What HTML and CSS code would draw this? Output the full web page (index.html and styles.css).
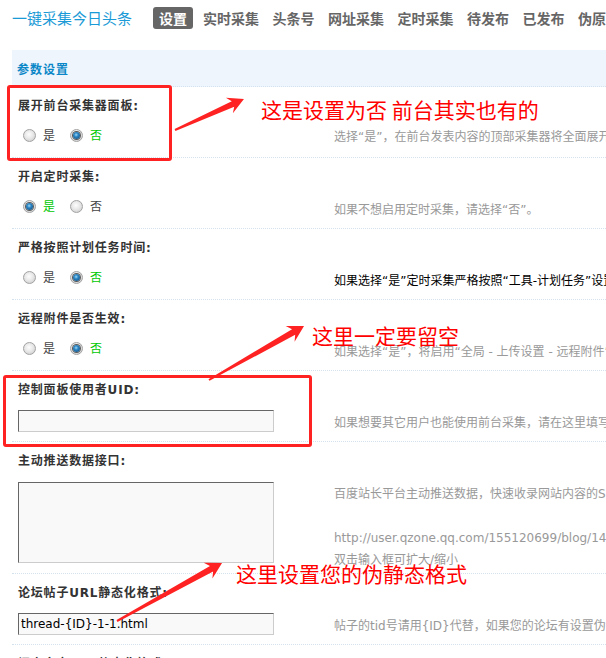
FILE: index.html
```html
<!DOCTYPE html>
<html lang="zh-CN">
<head>
<meta charset="utf-8">
<title>一键采集今日头条 - 设置</title>
<link rel="stylesheet" href="styles.css">
</head>
<body>
<div class="page">
  <div class="top">
    <h1 class="brand">一键采集今日头条</h1>
    <ul class="nav">
      <li class="on">设置</li>
      <li>实时采集</li>
      <li>头条号</li>
      <li>网址采集</li>
      <li>定时采集</li>
      <li>待发布</li>
      <li>已发布</li>
      <li>伪原创</li>
    </ul>
  </div>

  <div class="panel">
    <div class="panel-head">参数设置</div>

    <div class="row">
      <div class="row-label">展开前台采集器面板:</div>
      <div class="row-body">
        <div class="opt opt-radio">
          <span class="radio"></span><span class="rlab">是</span>
          <span class="radio checked"></span><span class="rlab on">否</span>
        </div>
        <div class="tips tips-up">选择“是”，在前台发表内容的顶部采集器将全面展开</div>
      </div>
    </div>

    <div class="row">
      <div class="row-label">开启定时采集:</div>
      <div class="row-body">
        <div class="opt opt-radio">
          <span class="radio checked"></span><span class="rlab on">是</span>
          <span class="radio"></span><span class="rlab">否</span>
        </div>
        <div class="tips">如果不想启用定时采集，请选择“否”。</div>
      </div>
    </div>

    <div class="row">
      <div class="row-label">严格按照计划任务时间:</div>
      <div class="row-body">
        <div class="opt opt-radio">
          <span class="radio"></span><span class="rlab">是</span>
          <span class="radio checked"></span><span class="rlab on">否</span>
        </div>
        <div class="tips tips-dark">如果选择“是”定时采集严格按照“工具-计划任务”设置的时间运行</div>
      </div>
    </div>

    <div class="row">
      <div class="row-label">远程附件是否生效:</div>
      <div class="row-body">
        <div class="opt opt-radio">
          <span class="radio"></span><span class="rlab">是</span>
          <span class="radio checked"></span><span class="rlab on">否</span>
        </div>
        <div class="tips">如果选择“是”，将启用“全局 - 上传设置 - 远程附件”</div>
      </div>
    </div>

    <div class="row">
      <div class="row-label">控制面板使用者UID:</div>
      <div class="row-body">
        <div class="opt"><input class="txt" type="text" value=""></div>
        <div class="tips">如果想要其它用户也能使用前台采集，请在这里填写用户UID</div>
      </div>
    </div>

    <div class="row">
      <div class="row-label">主动推送数据接口:</div>
      <div class="row-body">
        <div class="opt opt-area"><textarea class="area"></textarea></div>
        <div class="tips">百度站长平台主动推送数据，快速收录网站内容的SEO利器<br><br>http://user.qzone.qq.com/155120699/blog/1431413478<br>双击输入框可扩大/缩小</div>
      </div>
    </div>

    <div class="row">
      <div class="row-label">论坛帖子URL静态化格式:</div>
      <div class="row-body">
        <div class="opt"><input class="txt" type="text" value="thread-{ID}-1-1.html"></div>
        <div class="tips">帖子的tid号请用{ID}代替，如果您的论坛有设置伪静态</div>
      </div>
    </div>

    <div class="row">
      <div class="row-label">门户文章URL静态化格式:</div>
      <div class="row-body">
        <div class="opt"><input class="txt" type="text" value="article-{ID}-1.html"></div>
        <div class="tips">文章的aid号请用{ID}代替</div>
      </div>
    </div>
  </div>

  <div class="notes">
    <div class="mark mark-1"></div>
    <div class="mark mark-2"></div>
    <div class="note note-1">这是设置为否 前台其实也有的</div>
    <div class="note note-2">这里一定要留空</div>
    <div class="note note-3">这里设置您的伪静态格式</div>
    <svg class="arrows" width="606" height="658" viewBox="0 0 606 658">
      <polygon class="arrow" points="0,-1 63.6,-3 59.6,-8.5 75.6,0 59.6,8.5 63.6,3 0,1" transform="translate(175 130) rotate(-24.2)"/>
      <polygon class="arrow" points="0,-1 97.3,-3.2 93.3,-9 109.3,0 93.3,9 97.3,3.2 0,1" transform="translate(209 380) rotate(-29.6)"/>
      <polygon class="arrow" points="0,-1 108,-3.2 104,-9 120,0 104,9 108,3.2 0,1" transform="translate(117 621) rotate(-28.9)"/>
    </svg>
  </div>
</div>
</body>
</html>
```
FILE: styles.css
```css
* { box-sizing: border-box; }

html, body {
  margin: 0;
  padding: 0;
  overflow: hidden;
  background: #fff;
}

body {
  font-family: "DejaVu Sans", "Noto Sans CJK SC", sans-serif;
  font-size: 12px;
  color: #333;
}

.page {
  position: relative;
  width: 606px;
  height: 658px;
  overflow: hidden;
}

/* top bar */
.top {
  display: flex;
  align-items: center;
  height: 36px;
  padding-left: 12px;
  white-space: nowrap;
}

.brand {
  margin: 0 21px 0 0;
  font-family: "Noto Sans CJK SC", sans-serif;
  font-size: 15px;
  font-weight: normal;
  line-height: 22px;
  color: #1a9ad6;
  flex: none;
}

.nav {
  display: flex;
  list-style: none;
  margin: 0;
  padding: 0;
}

.nav li {
  flex: none;
  height: 22px;
  padding: 0 6px;
  margin-right: 1.5px;
  line-height: 22px;
  font-family: "Noto Sans CJK SC", sans-serif;
  font-size: 14px;
  font-weight: bold;
  color: #666;
  border-radius: 3px;
}

.nav li.on {
  margin-right: 4px;
  background: #666;
  color: #fff;
}

/* panel */
.panel {
  margin: 14px 0 0 12px;
}

.panel-head {
  height: 37px;
  padding: 2px 0 0 5px;
  line-height: 34px;
  background: #eef5fc;
  border-bottom: 1px dotted #d3e2ee;
  font-family: "Noto Sans CJK SC", sans-serif;
  font-weight: bold;
  font-size: 12px;
  letter-spacing: 1px;
  color: #0b87c8;
}

.row {
  border-bottom: 1px dotted #d3e2ee;
  padding-left: 6px;
}

.row-label {
  height: 30px;
  padding-top: 10px;
  line-height: 18px;
  font-weight: bold;
  letter-spacing: 0.8px;
  color: #333;
  white-space: nowrap;
}

.row-body {
  display: flex;
}

.opt {
  flex: none;
  width: 316px;
  padding: 9px 0;
}

.opt-radio {
  display: flex;
  align-items: center;
  height: 40px;
  padding: 9px 0 13px;
}

.opt-area {
  padding: 10px 0;
}

.radio {
  position: relative;
  flex: none;
  width: 13px;
  height: 13px;
  margin-left: 5px;
  border-radius: 50%;
  border: 1px solid #a2a2a2;
  background: radial-gradient(circle at 45% 40%, #fdfdfd 0, #e8e8e8 45%, #c4c4c4 100%);
}

.radio + .rlab + .radio {
  margin-left: 15px;
}

.radio.checked::after {
  content: "";
  position: absolute;
  left: 2px;
  top: 2px;
  width: 7px;
  height: 7px;
  border-radius: 50%;
  background: radial-gradient(circle at 45% 40%, #9fd8f7 0, #2b86c4 35%, #0c3f6e 100%);
  box-shadow: 0 0 0 1px #5a5a5a;
}

.rlab {
  margin-left: 7px;
  width: 12px;
  font-family: "Noto Sans CJK SC", sans-serif;
  font-size: 12px;
  line-height: 18px;
  color: #444;
}

.rlab.on {
  color: #00c800;
}

.txt {
  display: block;
  width: 256px;
  height: 22px;
  margin: 0;
  padding: 0 2px;
  border: 1px solid;
  border-color: #666 #ccc #ccc #666;
  background: #f9f9f9;
  font-family: "DejaVu Sans", sans-serif;
  font-size: 12px;
  color: #000;
  outline: none;
}

.area {
  display: block;
  width: 256px;
  height: 81px;
  margin: 0;
  padding: 2px;
  border: 1px solid;
  border-color: #666 #ccc #ccc #666;
  background: #f9f9f9;
  resize: none;
  outline: none;
}

.tips {
  flex: 1;
  min-width: 0;
  padding-top: 11px;
  line-height: 22px;
  color: #999;
  white-space: nowrap;
  overflow: hidden;
}

.tips-up {
  padding-top: 9px;
}

.tips-dark {
  color: #000;
}

/* annotation layer */
.notes {
  position: absolute;
  left: 0;
  top: 0;
  width: 606px;
  height: 658px;
  pointer-events: none;
}

.mark {
  position: absolute;
  border: 3px solid #f22;
  border-radius: 3px;
}

.mark-1 { left: 7px; top: 85px; width: 165px; height: 76px; }
.mark-2 { left: 3px; top: 375px; width: 309px; height: 72px; }

.note {
  position: absolute;
  font-family: "Noto Sans CJK SC", sans-serif;
  font-size: 21px;
  line-height: 21px;
  color: #f00;
  white-space: nowrap;
}

.note-1 { left: 261px; top: 99px; }
.note-2 { left: 312px; top: 325px; }
.note-3 { left: 236px; top: 563px; }

.arrows {
  position: absolute;
  left: 0;
  top: 0;
}

.arrow {
  fill: #f22;
}
```
